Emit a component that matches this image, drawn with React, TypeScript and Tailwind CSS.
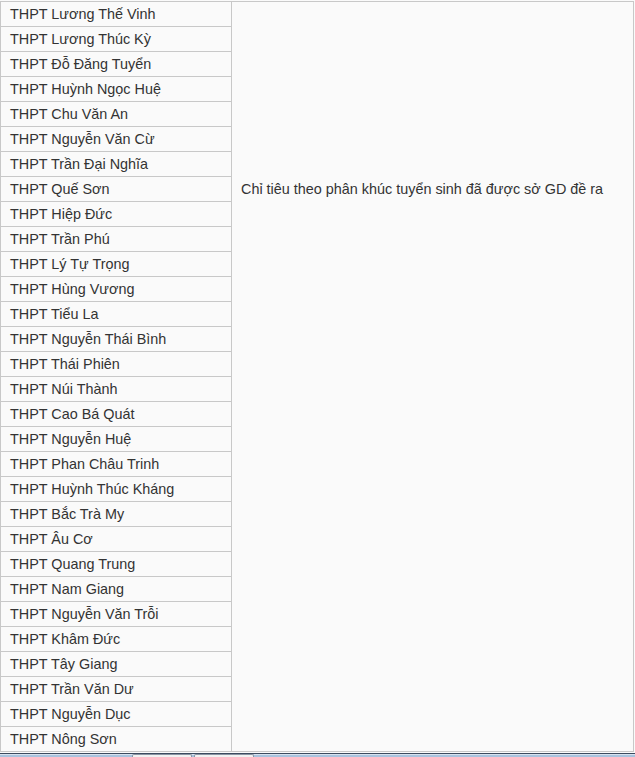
const schools = [
  "THPT Lương Thế Vinh",
  "THPT Lương Thúc Kỳ",
  "THPT Đỗ Đăng Tuyển",
  "THPT Huỳnh Ngọc Huệ",
  "THPT Chu Văn An",
  "THPT Nguyễn Văn Cừ",
  "THPT Trần Đại Nghĩa",
  "THPT Quế Sơn",
  "THPT Hiệp Đức",
  "THPT Trần Phú",
  "THPT Lý Tự Trọng",
  "THPT Hùng Vương",
  "THPT Tiểu La",
  "THPT Nguyễn Thái Bình",
  "THPT Thái Phiên",
  "THPT Núi Thành",
  "THPT Cao Bá Quát",
  "THPT Nguyễn Huệ",
  "THPT Phan Châu Trinh",
  "THPT Huỳnh Thúc Kháng",
  "THPT Bắc Trà My",
  "THPT Âu Cơ",
  "THPT Quang Trung",
  "THPT Nam Giang",
  "THPT Nguyễn Văn Trỗi",
  "THPT Khâm Đức",
  "THPT Tây Giang",
  "THPT Trần Văn Dư",
  "THPT Nguyễn Dục",
  "THPT Nông Sơn",
];

export default function App() {
  return (
    <div className="flex h-[757px] w-[635px] flex-col overflow-hidden bg-[#fafafa] font-['Liberation_Sans',Arial,sans-serif] text-[14.4px] text-[#333]">
      <div className="pt-px">
        <table className="w-[634px] table-fixed border-collapse">
          <tbody>
            {schools.map((name, i) => (
              <tr key={name} className="h-[25px]">
                <td className="w-[231px] whitespace-nowrap border border-[#c8c8c8] py-0 pl-[9px] leading-[24px]">
                  {name}
                </td>
                {i === 0 && (
                  <td
                    rowSpan={schools.length}
                    className="whitespace-nowrap border border-[#c8c8c8] pl-[9px] pt-[175px] align-top leading-[24px]"
                  >
                    Chỉ tiêu theo phân khúc tuyển sinh đã được sở GD đề ra
                  </td>
                )}
              </tr>
            ))}
          </tbody>
        </table>
      </div>
      {/* window bottom strip with tabs */}
      <div className="relative mt-px flex-1 border-t border-[#3b4a5e] bg-[#a9c3de]">
        <div className="absolute left-0 top-0 h-px w-full bg-[#d6e2ef]" />
        <div className="absolute left-[132px] top-0 h-[6px] w-[60px] rounded-t-[2px] border border-b-0 border-[#8a96a4] bg-[#f2f2f2]" />
        <div className="absolute left-[194px] top-0 h-[6px] w-[60px] rounded-t-[2px] border border-b-0 border-[#8a96a4] bg-[#f2f2f2]" />
      </div>
    </div>
  );
}
